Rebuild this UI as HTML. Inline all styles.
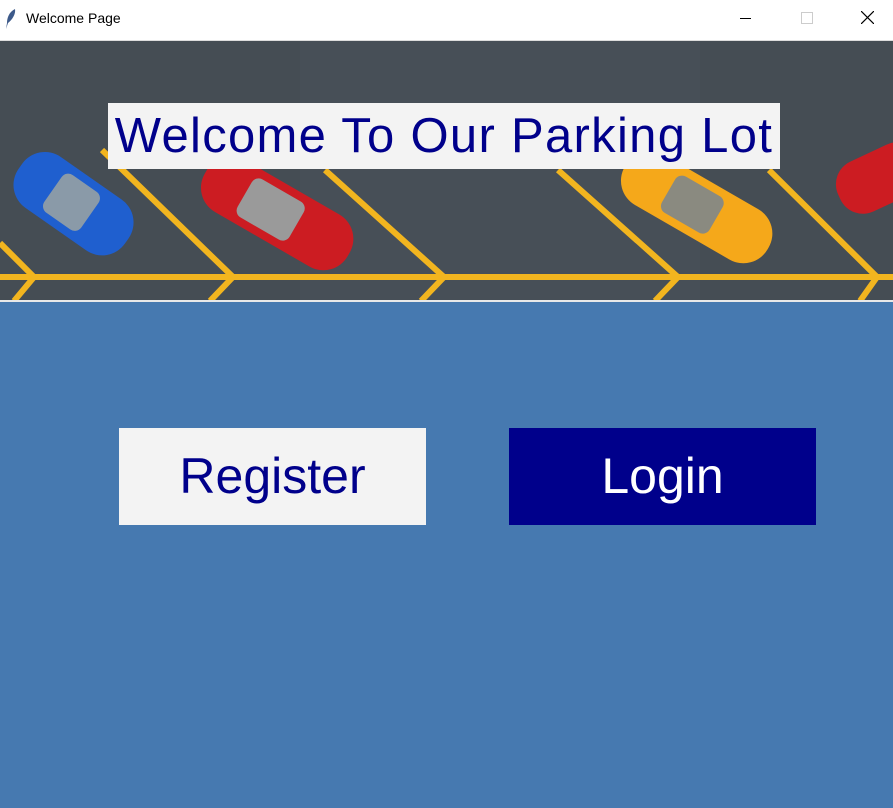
<!DOCTYPE html>
<html><head><style>
body{margin:0;width:893px;height:808px;overflow:hidden;background:#4679b0;font-family:"Liberation Sans",Arial,sans-serif;position:relative}
.tb{position:absolute;left:0;top:0;width:893px;height:40px;background:#fff;border-bottom:1px solid #ddd}
.tt{position:absolute;left:26px;top:10px;font-size:14px;color:#000}
.img{position:absolute;left:0;top:41px}
.lbl{position:absolute;left:108px;top:103px;width:672px;height:66px;background:#f3f3f3;color:#00008b;font-size:49px;letter-spacing:1.3px;line-height:66px;text-align:center;white-space:nowrap}
.btn{position:absolute;top:428px;width:307px;height:97px;font-size:50px;line-height:97px;text-align:center}
</style></head><body>
<div class="tb">
<svg style="position:absolute;left:4px;top:8px" width="14" height="22"><path d="M11 1 C5 4 3 10 3 15 L2 21 L4 15 C8 12 12 6 11 1Z" fill="#3d5a8a"/></svg>
<div class="tt">Welcome Page</div>
<div style="position:absolute;left:740px;top:18px;width:11px;height:1px;background:#000"></div>
<div style="position:absolute;left:801px;top:12px;width:10px;height:10px;border:1px solid #ccc"></div>
<svg style="position:absolute;left:861px;top:11px" width="13" height="13"><path d="M0 0L13 13M13 0L0 13" stroke="#000" stroke-width="1.2"/></svg>
</div>
<svg class="img" width="893" height="261" viewBox="0 41 893 261">
<rect x="0" y="41" width="893" height="261" fill="#454d54"/>
<rect x="300" y="41" width="400" height="260" fill="#49525a" opacity=".6"/>
<g stroke="#f2b51f" stroke-width="6" fill="none">
<path d="M0 277H893"/>
<path d="M102 150L233 277L210 301M325 170L444 277L421 301M558 170L678 277L655 301M769 170L877 277L860 301M0 243L34 277L14 301"/>
</g>
<g transform="rotate(35 70 200)"><rect x="10" y="170" width="130" height="62" rx="28" fill="#1f5fcf"/><rect x="50" y="178" width="45" height="46" rx="8" fill="#8a9aa8"/></g>
<g transform="rotate(30 275 212)"><rect x="195" y="182" width="165" height="60" rx="28" fill="#cc1c22"/><rect x="240" y="190" width="60" height="44" rx="8" fill="#9a9a9a"/></g>
<g transform="rotate(30 695 205)"><rect x="615" y="177" width="165" height="58" rx="28" fill="#f5a81a"/><rect x="665" y="185" width="55" height="42" rx="8" fill="#8a8a80"/></g>
<g transform="rotate(-25 870 180)"><rect x="835" y="155" width="90" height="55" rx="25" fill="#cc1c22"/></g>
<rect x="0" y="300" width="893" height="2" fill="#e8e8e8"/>
</svg>
<div class="lbl">Welcome To Our Parking Lot</div>
<div class="btn" style="left:119px;background:#f3f3f3;color:#00008b">Register</div>
<div class="btn" style="left:509px;background:#00008b;color:#fff">Login</div>
</body></html>
